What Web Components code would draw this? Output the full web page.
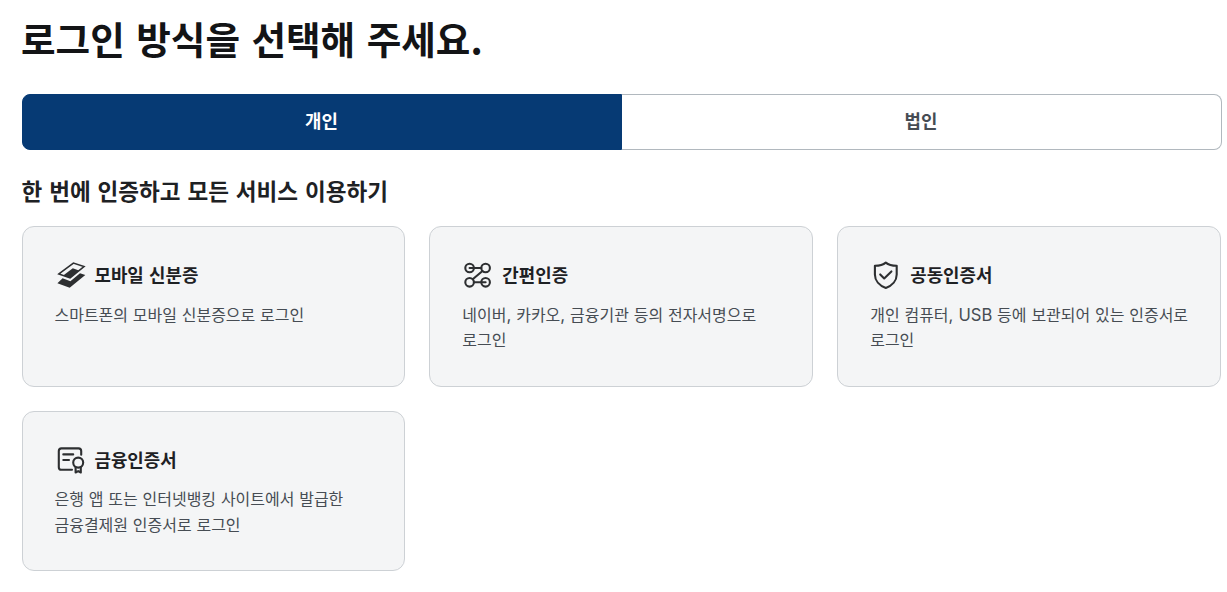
<!DOCTYPE html>
<html lang="ko">
<head>
<meta charset="utf-8">
<title>로그인</title>
<style>
    body {
        margin: 0;
        background: #fff;
        color: #1e2124;
        font-family: "Noto Sans CJK KR", sans-serif;
    }
    .latin {
        font-family: Inter, sans-serif;
        font-size: 17px;
        line-height: 1;
    }
    .latin.word {
        font-size: 16.6px;
    }
</style>
</head>
<body>
<login-page>
    <span slot="title">로그인 방식을 선택해 주세요.</span>
    <login-tabs slot="tabs">
        <login-tab active>개인</login-tab>
        <login-tab>법인</login-tab>
    </login-tabs>
    <span slot="subtitle">한 번에 인증하고 모든 서비스 이용하기</span>
    <login-card icon="mobile">
        <span slot="title">모바일 신분증</span>
        스마트폰의 모바일 신분증으로 로그인
    </login-card>
    <login-card icon="simple">
        <span slot="title">간편인증</span>
        네이버<span class="latin">,</span> 카카오<span class="latin">,</span> 금융기관 등의 전자서명으로<br>로그인
    </login-card>
    <login-card icon="shield">
        <span slot="title">공동인증서</span>
        개인 컴퓨터<span class="latin word">, USB</span> 등에 보관되어 있는 인증서로<br>로그인
    </login-card>
    <login-card icon="finance">
        <span slot="title">금융인증서</span>
        은행 앱 또는 인터넷뱅킹 사이트에서 발급한<br>금융결제원 인증서로 로그인
    </login-card>
</login-page>

<script>
    const ICONS = {
        mobile: `
            <path d="M3.9 14.9 18.4 4.1 29 7.6 15.1 18.9Z" stroke-width="1.6" stroke-linejoin="miter"/>
            <path d="M8.2 16.6 17.8 9.2 24 11.4 15.1 18.9Z" fill="currentColor" stroke="none"/>
            <path d="M2.4 24.2 7.6 19.3 15.4 22.2 25 14.2 30.3 16 14.7 28.7Z" fill="currentColor" stroke="none"/>`,
        simple: `
            <circle cx="7.6" cy="9" r="4.3"/>
            <circle cx="23.6" cy="9" r="4.3"/>
            <circle cx="7.6" cy="23.3" r="4.3"/>
            <circle cx="23.6" cy="23.3" r="4.3"/>
            <path d="M7.6 9H19.3M20.5 12 10.7 20.3M11.9 23.3H23.6"/>`,
        shield: `
            <path d="M15.8 3.6C13 6 9 6.8 4.9 6.8V15.5C4.9 21.5 9.3 26.6 15.8 28.9C22.3 26.6 26.7 21.5 26.7 15.5V6.8C22.6 6.8 18.6 6 15.8 3.6Z"/>
            <path d="M10.2 15.4 14.2 19.4 21.4 12.4"/>`,
        finance: `
            <path d="M26.2 10.8V7Q26.2 4.4 23.6 4.4H6.4Q3.8 4.4 3.8 7V23.2Q3.8 25.8 6.4 25.8H17"/>
            <path d="M8.3 10.4H18.2M8.3 16H14"/>
            <circle cx="23.2" cy="18.6" r="5"/>
            <path d="M20.6 23V28.5L23.2 27.1 25.8 28.5V23"/>`,
    };

    class LoginPage extends HTMLElement {
        constructor() {
            super();
            this.attachShadow({ mode: "open" }).innerHTML = `
                <style>
                    :host {
                        display: block;
                        width: 1200px;
                        padding: 8px 0 0 22px;
                    }
                    h1 {
                        margin: 0 0 26px -1px;
                        color: #131416;
                        font-size: 37.6px;
                        font-weight: 700;
                        line-height: 60px;
                        word-spacing: 1px;
                    }
                    h2 {
                        margin: 23px 0 18px -0.5px;
                        font-size: 22.55px;
                        font-weight: 700;
                        line-height: 35px;
                        word-spacing: 0.6px;
                    }
                    .cards {
                        display: grid;
                        grid-template-columns: repeat(3, minmax(0, 1fr));
                        grid-auto-rows: 160.5px;
                        gap: 24px;
                        width: 1199.6px;
                        margin-left: -0.5px;
                    }
                </style>
                <h1><slot name="title"></slot></h1>
                <slot name="tabs"></slot>
                <h2><slot name="subtitle"></slot></h2>
                <div class="cards"><slot></slot></div>
            `;
        }
    }

    class LoginTabs extends HTMLElement {
        constructor() {
            super();
            this.attachShadow({ mode: "open" }).innerHTML = `
                <style>
                    :host {
                        display: grid;
                        grid-template-columns: 1fr 1fr;
                        height: 56px;
                    }
                </style>
                <slot></slot>
            `;
        }
    }

    class LoginTab extends HTMLElement {
        constructor() {
            super();
            this.attachShadow({ mode: "open" }).innerHTML = `
                <style>
                    :host {
                        display: flex;
                        align-items: center;
                        justify-content: center;
                        box-sizing: border-box;
                        padding: 0 1px 4px 0;
                        border: 1px solid #b1b8be;
                        border-left: 0;
                        border-radius: 0 8px 8px 0;
                        color: #464c53;
                        font-size: 17.86px;
                        font-weight: 700;
                        line-height: 28px;
                    }
                    :host([active]) {
                        border: 1px solid #063a74;
                        border-radius: 8px 0 0 8px;
                        background: #063a74;
                        color: #fff;
                    }
                </style>
                <slot></slot>
            `;
        }
    }

    class LoginCard extends HTMLElement {
        constructor() {
            super();
            this.attachShadow({ mode: "open" }).innerHTML = `
                <style>
                    :host {
                        display: block;
                        box-sizing: border-box;
                        padding: 32px;
                        border: 1px solid #cdd1d5;
                        border-radius: 12px;
                        background: #f4f5f6;
                    }
                    .head {
                        display: flex;
                        align-items: center;
                        gap: 8px;
                        height: 32px;
                    }
                    svg {
                        width: 32px;
                        height: 32px;
                        color: #2d2f31;
                    }
                    strong {
                        padding-bottom: 2px;
                        font-size: 17.86px;
                        font-weight: 700;
                        line-height: 28px;
                        word-spacing: 0.3px;
                    }
                    p {
                        margin: 10.5px 0 0;
                        color: #464c53;
                        font-size: 15.97px;
                        line-height: 25.5px;
                        white-space: nowrap;
                        word-spacing: 0.4px;
                    }
                </style>
                <div class="head">
                    <svg viewBox="0 0 32 32" fill="none" stroke="currentColor" stroke-width="2.1"
                        stroke-linecap="round" stroke-linejoin="round"></svg>
                    <strong><slot name="title"></slot></strong>
                </div>
                <p><slot></slot></p>
            `;
        }

        connectedCallback() {
            const icon = this.getAttribute("icon");
            this.shadowRoot.querySelector("svg").innerHTML = ICONS[icon] ?? "";
        }
    }

    customElements.define("login-page", LoginPage);
    customElements.define("login-tabs", LoginTabs);
    customElements.define("login-tab", LoginTab);
    customElements.define("login-card", LoginCard);
</script>
</body>
</html>
